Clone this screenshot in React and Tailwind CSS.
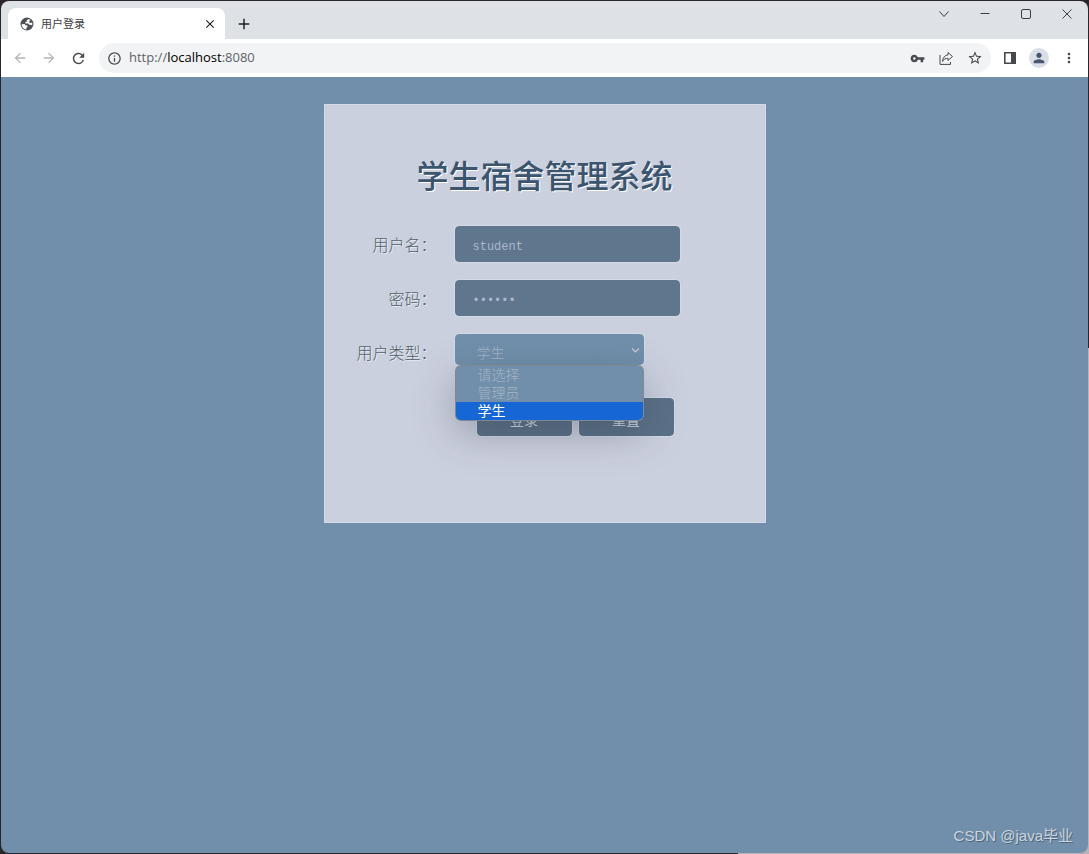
import React from 'react'
import { MdAdd, MdArrowBack, MdArrowForward, MdClose, MdInfoOutline, MdMoreVert, MdPerson, MdRefresh, MdStarBorder, MdVpnKey } from 'react-icons/md'

const userTypes = ['请选择', '管理员', '学生']

const GlobeIcon = () => (
  <svg width="14" height="14" viewBox="0 0 14 14">
    <circle cx="7" cy="7" r="6.500" fill="#4d5156"/>
    <path fill="#fff" d="M8.600 1.900L6.800 3.200l.1 1.200-1.400.6v1.600H8.200l.9 1.200h1.400l1.600.5c.3-1 .3-2 .1-2.900l-1.700.5-1.300-.7.1-1.300 1.300-.9c-.6-.5-1.300-.9-2-1.100z"/>
    <path fill="#fff" d="M1.600 7.200c0 2.600 1.900 4.900 4.700 5.200v-1.600l1.200-.9-.2-1.300-1.700-.3-1.100-1.200z"/>
  </svg>
)

const ShareIcon = () => (
  <svg width="16" height="16" viewBox="0 0 16 16" fill="none" stroke="currentColor" strokeLinejoin="round">
    <path d="M2 5v9.400h10.500v-2.400"/>
    <path d="M10 2.500l4.500 4-4.500 4V8.300C7.400 8.300 5.800 9.300 4.500 11.400 4.800 7.800 6.800 5.200 10 4.800z"/>
  </svg>
)

const PanelIcon = () => (
  <svg width="14" height="14" viewBox="0 0 14 14" fill="currentColor">
    <path fillRule="evenodd" d="M1 1h12v12H1zM2.600 2.600v8.800h5.400V2.600z"/>
  </svg>
)

function TabStrip(){
  return <div className="flex h-[38px] items-end bg-[#dee1e6] pl-[7px] text-[#202124]">
    <div className="flex h-[31px] w-[217px] items-center rounded-t-lg bg-white pl-3 pr-2">
      <GlobeIcon/>
      <span className="ml-[7px] flex-1 text-[11px] text-[#3c4043]">用户登录</span>
      <button aria-label="Close tab"><MdClose size={14} stroke="currentColor"/></button>
    </div>
    <button aria-label="New tab" className="mb-1.5 ml-2.5"><MdAdd size={18} stroke="currentColor"/></button>
    <div className="mb-[19px] ml-auto flex items-center gap-[29px] pr-[15px] text-[#3c4043]">
      <button aria-label="Search tabs">
        <svg width="12" height="12" viewBox="0 0 12 12" fill="none" stroke="currentColor"><path d="M1.500 3.500L6 8.500l4.500-5"/></svg>
      </button>
      <button aria-label="Minimize">
        <svg width="12" height="12" viewBox="0 0 12 12" stroke="currentColor"><path d="M1.500 5.500h9"/></svg>
      </button>
      <button aria-label="Maximize">
        <svg width="12" height="12" viewBox="0 0 12 12" fill="none" stroke="currentColor"><rect x="1.500" y="1.500" width="9" height="9" rx="1.500"/></svg>
      </button>
      <button aria-label="Close">
        <svg width="12" height="12" viewBox="0 0 12 12" stroke="currentColor"><path d="M1.500 1.500l9 9M10.500 1.500l-9 9"/></svg>
      </button>
    </div>
  </div>
}

function Toolbar(){
  return <div className="flex h-[38px] items-center bg-white px-[11px] text-[#46494d]">
    <div className="flex items-center gap-[13px]">
      <button aria-label="Back" className="text-[#b4b6b9]"><MdArrowBack size={16}/></button>
      <button aria-label="Forward" className="text-[#b4b6b9]"><MdArrowForward size={16}/></button>
      <button aria-label="Reload"><MdRefresh size={17}/></button>
    </div>
    <div className="ml-3 flex h-[30px] flex-1 items-center rounded-full bg-[#f1f3f4] px-2">
      <MdInfoOutline size={15}/>
      <div className="ml-[7px] flex-1 font-['Open_Sans',sans-serif] text-[13px] text-[#5f6368]">http://<span className="text-black">localhost</span>:8080</div>
      <div className="flex items-center gap-[13px]">
        <button aria-label="Passwords"><MdVpnKey size={15}/></button>
        <button aria-label="Share"><ShareIcon/></button>
        <button aria-label="Bookmark"><MdStarBorder size={16}/></button>
      </div>
    </div>
    <div className="ml-3 flex items-center gap-3">
      <button aria-label="Side panel"><PanelIcon/></button>
      <button aria-label="Profile" className="flex size-5 items-center justify-center rounded-full bg-[#dadfe6] text-[#475670]"><MdPerson size={16}/></button>
      <button aria-label="Menu"><MdMoreVert size={16}/></button>
    </div>
  </div>
}

const labelStyle = "w-28 shrink-0 text-right text-base/9 font-light text-[#4f6266] [text-shadow:1px_1px_0_#e6eaf2]"
const inputStyle = "h-9 w-[225px] rounded bg-[#5f768d] px-[18px] pt-1.5 text-xs text-[#a9bacd] outline-1 outline-[#d3dae6]"
const buttonStyle = "h-[38px] w-[95px] rounded bg-[#5b7188] pt-1 text-sm text-[#d5dce5] outline-1 outline-[#d3dae6]"

function LoginForm(){
  const [name,setName]=React.useState('student')
  const [password,setPassword]=React.useState('123456')
  const [type,setType]=React.useState('学生')

  return <form onSubmit={e=>e.preventDefault()} className="mx-auto w-full max-w-[442px] border border-[#d5dbe6] bg-[#cbd0df] pb-[86px] pt-[45px]">
    <h1 className="text-center text-[32px]/[48px] font-medium text-[#3c556e] [text-shadow:1px_1px_0_#fff]">学生宿舍管理系统</h1>
    <div className="mt-7 flex flex-col gap-[18px]">
      <div className="flex gap-[18px]">
        <label htmlFor="name" className={labelStyle}>用户名：</label>
        <input id="name" className={inputStyle + " font-['Liberation_Mono','Noto_Sans_CJK_SC',monospace]"} value={name} onChange={e=>setName(e.target.value)}/>
      </div>
      <div className="flex gap-[18px]">
        <label htmlFor="password" className={labelStyle}>密码：</label>
        <input id="password" type="password" className={inputStyle + " font-['Liberation_Mono',monospace]"} value={password} onChange={e=>setPassword(e.target.value)}/>
      </div>
      <div className="flex gap-[18px]">
        <label htmlFor="type" className={labelStyle}>用户类型：</label>
        <div className="relative w-[189px]">
          <select id="type" value={type} onChange={e=>setType(e.target.value)} className="h-[31px] w-full appearance-none rounded bg-[#718fab] pl-[22px] pt-1 text-sm font-light text-[#a3b5c8] outline-1 outline-[#d3dae6]">
            {userTypes.map(t=><option key={t}>{t}</option>)}
          </select>
          <svg className="pointer-events-none absolute right-1 top-3" width="9" height="9" viewBox="0 0 9 9" fill="none" stroke="#c3cfdb" strokeWidth="1.200"><path d="M1 2.500L4.500 6 8 2.500"/></svg>
          <ul className="absolute inset-x-px top-8 z-10 rounded-[5px] bg-[#718fab] text-sm/[16px] font-light text-[#a6b5c6] shadow-[0_0_0_1px_#7d8994,0_12px_40px_rgba(50,55,65,0.35)]">
            {userTypes.map(t=>(
              <li key={t} className={t===type ? "bg-[#1766d6] font-normal text-white last:rounded-b-[5px]" : "last:rounded-b-[5px]"}>
                <button type="button" onClick={()=>setType(t)} className="block w-full pb-0.5 pl-[22px] text-left">{t}</button>
              </li>
            ))}
          </ul>
        </div>
      </div>
    </div>
    <div className="ml-[152px] mt-7 flex gap-[7px]">
      <button type="submit" className={buttonStyle}>登录</button>
      <button type="reset" className={buttonStyle}>重置</button>
    </div>
  </form>
}

export default function App(){
  return <div className="flex min-h-screen bg-[#29262b] bg-[linear-gradient(#b8b3b8,#b8b3b8)] bg-[length:351px_506px] bg-right-bottom bg-no-repeat p-px font-['Noto_Sans_CJK_SC',sans-serif]">
    <div className="flex flex-1 flex-col overflow-hidden rounded-lg">
      <TabStrip/>
      <Toolbar/>
      <main className="flex flex-1 flex-col bg-[#718fab] pt-[27px]">
        <LoginForm/>
        <div className="mt-auto px-[15px] pb-1.5 text-right font-['Liberation_Sans','Noto_Sans_CJK_SC',sans-serif] text-[15px] text-[#cbd5df] [text-shadow:1px_1px_0_#4f6579]">CSDN @java毕业</div>
      </main>
    </div>
  </div>
}
